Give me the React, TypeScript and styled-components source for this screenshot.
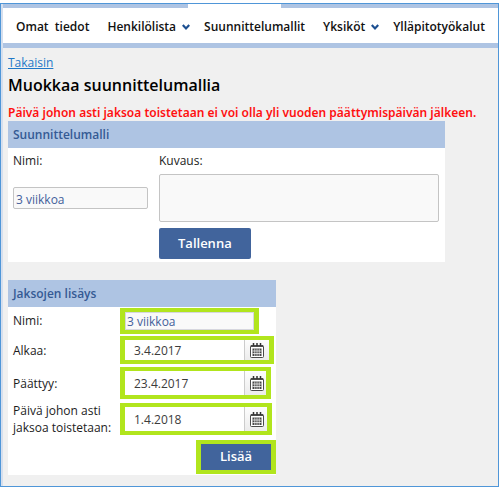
import React from "react";
import styled, { createGlobalStyle } from "styled-components";

const GlobalStyle = createGlobalStyle`
  *, *::before, *::after { box-sizing: border-box; }
  html, body, #root { height: 100%; }
  body { margin: 0; background: #fff; }
  body, input, textarea, button {
    font-family: "Open Sans", "Noto Sans", sans-serif;
    font-size: 12px;
    line-height: 17px;
    color: #1c1c1c;
  }
`;

const Page = styled.div`
  display: flex;
  flex-direction: column;
  min-height: 100%;
  padding: 3px 2px 1px 0;
`;

const Frame = styled.div`
  display: flex;
  flex: 1;
  flex-direction: column;
  border: 1px solid #4f96d8;
  background: #f0f0f0;
`;

const Inner = styled.div`
  flex: 1;
  border-left: 2px solid #d5dfee;
`;

const Nav = styled.nav`
  border-bottom: 5px solid #aec4e3;
  background: #fff;
`;

const TabStrip = styled.div`
  display: grid;
  grid-template-columns: 185px 93px 1fr;
  height: 4px;
`;

const StripSegment = styled.span<{ $open?: boolean }>`
  background: ${(p) => (p.$open ? "#fff" : "#aec4e3")};
`;

const NavList = styled.ul`
  display: flex;
  height: 35px;
  margin: 0;
  padding: 2px 0 0 13px;
  list-style: none;
`;

const NavItem = styled.li<{ $menu?: boolean }>`
  display: flex;
  align-items: center;
  gap: 6px;
  margin-right: ${(p) => (p.$menu ? 14 : 18)}px;
`;

const NavLink = styled.a`
  color: #111;
  font-weight: 600;
  text-decoration: none;
  white-space: pre;
`;

const Main = styled.main`
  padding: 6px 20px 10px 5px;
`;

const BackLink = styled.a`
  display: block;
  width: fit-content;
  color: #1f78c8;
`;

const Title = styled.h1`
  margin: 4px 0 0;
  color: #000;
  font-size: 16px;
  font-weight: 600;
  line-height: 20px;
`;

const ErrorText = styled.p`
  margin: 10px 0 0;
  color: #f11;
  font-family: "Noto Sans", "Open Sans", sans-serif;
  font-weight: 600;
  line-height: 16px;
  white-space: nowrap;
`;

const Panels = styled.div`
  display: grid;
  gap: 18px;
`;

const Panel = styled.section<{ $width: number }>`
  width: 100%;
  max-width: ${(p) => p.$width}px;
  background: #fff;
`;

const PanelTitle = styled.h2`
  margin: 0;
  padding: 5px;
  background: #aec4e3;
  color: #355a94;
  font-size: 12px;
  font-weight: 600;
  line-height: 17px;
`;

const ModelForm = styled.form`
  display: grid;
  grid-template-columns: 135px 1fr;
  column-gap: 11px;
  padding: 4px 6px 3px 5px;
`;

const Label = styled.label`
  color: #1c1c1c;
`;

const ModelLabel = styled(Label)`
  height: 22px;
`;

const TextInput = styled.input`
  width: 100%;
  min-width: 0;
  height: 22px;
  padding: 2px 2px 0;
  align-self: center;
  border: 1px solid #c4c4c4;
  border-radius: 2px;
  background: #f9f9f9;
  color: #43609b;
`;

const Description = styled.textarea`
  display: block;
  width: 100%;
  height: 48px;
  border: 1px solid #c4c4c4;
  border-radius: 2px;
  background: #f9f9f9;
  resize: none;
`;

const Button = styled.button`
  display: block;
  padding: 7px 19px;
  border: 0;
  border-radius: 2px;
  background: #41649c;
  color: #fff;
  font-size: 13px;
  font-weight: 600;
`;

const SaveCell = styled.div`
  grid-column: 2;
  margin-top: 6px;
`;

const PeriodForm = styled.form`
  display: grid;
  grid-template-columns: 107px 1fr;
  grid-template-rows: 27px 32px 34px 38px 37px;
  align-items: center;
  padding-left: 5px;
`;

const Highlight = styled.div<{ $width: number; $height: number }>`
  display: flex;
  width: ${(p) => p.$width}px;
  height: ${(p) => p.$height}px;
  border: solid #b1e51d;
  border-width: 4px 5px;
`;

const SubmitCell = styled.div`
  display: flex;
  grid-column: 2;
  justify-content: flex-end;
`;

const SubmitButton = styled(Button)`
  flex: 1;
  padding: 0;
  border-radius: 0;
`;

const NameInput = styled(TextInput)`
  height: 100%;
  padding: 1px 1px 0;
  border-color: #d6d6de;
  border-radius: 0;
`;

const DateInput = styled.input`
  width: 120px;
  padding: 0 9px;
  border: 0;
  border-right: 1px solid #ccc;
  background: #fff;
  color: #3c3c3c;
`;

const CalendarButton = styled.button`
  display: flex;
  flex: 1;
  align-items: center;
  padding: 0 0 0 5px;
  border: 0;
  background: linear-gradient(#fdfdfd, #ececec);
`;

const Chevron = () => (
  <svg width="8" height="6" viewBox="0 0 8 6" aria-hidden="true">
    <path d="M0.800 1 L4 4.400 L7.200 1" fill="none" stroke="#1c4f91" strokeWidth="2.200" />
  </svg>
);

const CalendarIcon = () => (
  <svg width="14" height="15" viewBox="0 0 14 15" aria-hidden="true">
    <rect x="0.500" y="2.500" width="13" height="12" rx="1" fill="#fff" stroke="#4a4a4a" />
    <path d="M1 2h12v2H1z" fill="#4a4a4a" />
    <path d="M3.500 0v3M7 0v3M10.500 0v3" stroke="#333" strokeWidth="1.500" />
    <path d="M2.500 5.500h9v7.500h-9z" fill="#444" />
    <path d="M2.500 8h9M2.500 10.500h9M4.800 5.500v7.500M7 5.500v7.500M9.200 5.500v7.500" stroke="#fff" strokeWidth="0.700" />
  </svg>
);

const dates = [
  { id: "start", label: "Alkaa:", value: "3.4.2017", width: 154, height: 28 },
  { id: "end", label: "Päättyy:", value: "23.4.2017", width: 151, height: 32 },
  { id: "repeat", label: "Päivä johon asti jaksoa toistetaan:", value: "1.4.2018", width: 152, height: 32 },
];

export default function App() {
  return (
    <>
      <GlobalStyle />
      <Page>
        <Frame>
          <Inner>
            <Nav>
              <TabStrip aria-hidden="true">
                <StripSegment />
                <StripSegment $open />
                <StripSegment />
              </TabStrip>
              <NavList>
                <NavItem><NavLink href="#tiedot">{"Omat  tiedot"}</NavLink></NavItem>
                <NavItem $menu><NavLink href="#henkilot">Henkilölista</NavLink><Chevron /></NavItem>
                <NavItem><NavLink href="#mallit" aria-current="page">Suunnittelumallit</NavLink></NavItem>
                <NavItem $menu><NavLink href="#yksikot">Yksiköt</NavLink><Chevron /></NavItem>
                <NavItem><NavLink href="#yllapito">Ylläpitotyökalut</NavLink></NavItem>
              </NavList>
            </Nav>
            <Main>
              <BackLink href="#takaisin">Takaisin</BackLink>
              <Title>Muokkaa suunnittelumallia</Title>
              <ErrorText role="alert">
                Päivä johon asti jaksoa toistetaan ei voi olla yli vuoden päättymispäivän jälkeen.
              </ErrorText>
              <Panels>
                <Panel $width={437}>
                  <PanelTitle>Suunnittelumalli</PanelTitle>
                  <ModelForm onSubmit={(e) => e.preventDefault()}>
                    <ModelLabel htmlFor="model-name">Nimi:</ModelLabel>
                    <ModelLabel htmlFor="model-description">Kuvaus:</ModelLabel>
                    <TextInput id="model-name" defaultValue="3 viikkoa" />
                    <Description id="model-description" />
                    <SaveCell><Button type="submit">Tallenna</Button></SaveCell>
                  </ModelForm>
                </Panel>
                <Panel $width={268}>
                  <PanelTitle>Jaksojen lisäys</PanelTitle>
                  <PeriodForm onSubmit={(e) => e.preventDefault()}>
                    <Label htmlFor="period-name">Nimi:</Label>
                    <Highlight $width={139} $height={26}>
                      <NameInput id="period-name" defaultValue="3 viikkoa" />
                    </Highlight>
                    {dates.map((d) => (
                      <React.Fragment key={d.id}>
                        <Label htmlFor={d.id}>{d.label}</Label>
                        <Highlight $width={d.width} $height={d.height}>
                          <DateInput id={d.id} defaultValue={d.value} />
                          <CalendarButton type="button" aria-label="Avaa kalenteri"><CalendarIcon /></CalendarButton>
                        </Highlight>
                      </React.Fragment>
                    ))}
                    <SubmitCell>
                      <Highlight $width={80} $height={34}>
                        <SubmitButton type="submit">Lisää</SubmitButton>
                      </Highlight>
                    </SubmitCell>
                  </PeriodForm>
                </Panel>
              </Panels>
            </Main>
          </Inner>
        </Frame>
      </Page>
    </>
  );
}
